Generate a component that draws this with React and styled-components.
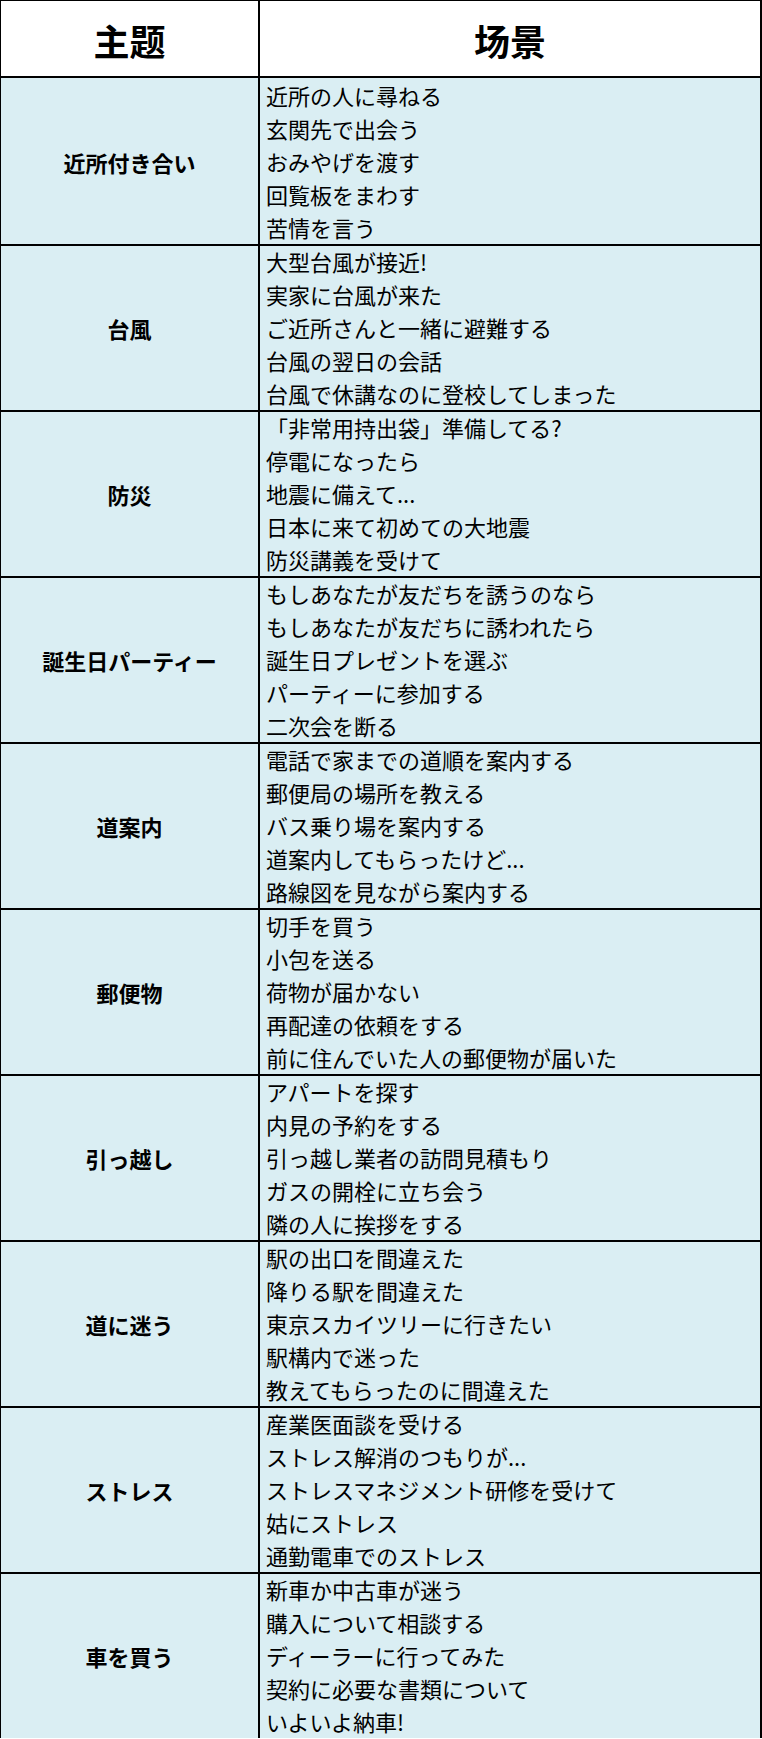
import React from 'react'
import styled, { createGlobalStyle } from 'styled-components'

const GlobalStyle = createGlobalStyle`
  html, body {
    margin: 0;
    padding: 0;
    background: #ffffff;
  }
  body {
    font-family: "Noto Sans CJK JP", "Noto Sans", sans-serif;
    color: #000;
  }
`

const data = [
  { theme: '近所付き合い', scenes: ['近所の人に尋ねる', '玄関先で出会う', 'おみやげを渡す', '回覧板をまわす', '苦情を言う'] },
  { theme: '台風', scenes: ['大型台風が接近!', '実家に台風が来た', 'ご近所さんと一緒に避難する', '台風の翌日の会話', '台風で休講なのに登校してしまった'] },
  { theme: '防災', scenes: ['「非常用持出袋」準備してる?', '停電になったら', '地震に備えて...', '日本に来て初めての大地震', '防災講義を受けて'] },
  { theme: '誕生日パーティー', scenes: ['もしあなたが友だちを誘うのなら', 'もしあなたが友だちに誘われたら', '誕生日プレゼントを選ぶ', 'パーティーに参加する', '二次会を断る'] },
  { theme: '道案内', scenes: ['電話で家までの道順を案内する', '郵便局の場所を教える', 'バス乗り場を案内する', '道案内してもらったけど...', '路線図を見ながら案内する'] },
  { theme: '郵便物', scenes: ['切手を買う', '小包を送る', '荷物が届かない', '再配達の依頼をする', '前に住んでいた人の郵便物が届いた'] },
  { theme: '引っ越し', scenes: ['アパートを探す', '内見の予約をする', '引っ越し業者の訪問見積もり', 'ガスの開栓に立ち会う', '隣の人に挨拶をする'] },
  { theme: '道に迷う', scenes: ['駅の出口を間違えた', '降りる駅を間違えた', '東京スカイツリーに行きたい', '駅構内で迷った', '教えてもらったのに間違えた'] },
  { theme: 'ストレス', scenes: ['産業医面談を受ける', 'ストレス解消のつもりが...', 'ストレスマネジメント研修を受けて', '姑にストレス', '通勤電車でのストレス'] },
  { theme: '車を買う', scenes: ['新車か中古車が迷う', '購入について相談する', 'ディーラーに行ってみた', '契約に必要な書類について', 'いよいよ納車!'] },
]

const Table = styled.div`
  width: 762px;
  box-sizing: border-box;
  border-top: 1px solid #000;
  border-left: 1px solid #000;
`

const Row = styled.div`
  display: grid;
  grid-template-columns: 259px 1fr;
  height: ${(p) => (p.$head ? '77px' : '166px')};
  background: ${(p) => (p.$head ? '#ffffff' : '#daeef3')};
`

const HeadCell = styled.div`
  box-sizing: border-box;
  border-right: 2px solid #000;
  border-bottom: 2px solid #000;
  display: flex;
  align-items: center;
  justify-content: center;
  font-family: "Noto Sans CJK SC", "Noto Sans", sans-serif;
  font-weight: 700;
  font-size: 36px;
  padding-top: 2px;
`

const ThemeCell = styled.div`
  box-sizing: border-box;
  border-right: 2px solid #000;
  border-bottom: 2px solid #000;
  display: flex;
  align-items: center;
  justify-content: center;
  font-weight: 700;
  font-size: 22px;
  padding-top: 2px;
`

const SceneCell = styled.div`
  box-sizing: border-box;
  border-right: 2px solid #000;
  border-bottom: 2px solid #000;
  padding: 1px 0 0 6px;
  display: flex;
  flex-direction: column;
`

const Scene = styled.div`
  font-size: 22px;
  line-height: 33px;
  white-space: nowrap;
`

export default function App() {
  return (
    <>
      <GlobalStyle />
      <Table>
        <Row $head>
          <HeadCell>主题</HeadCell>
          <HeadCell>场景</HeadCell>
        </Row>
        {data.map((r) => (
          <Row key={r.theme}>
            <ThemeCell>{r.theme}</ThemeCell>
            <SceneCell>
              {r.scenes.map((s) => (
                <Scene key={s}>{s}</Scene>
              ))}
            </SceneCell>
          </Row>
        ))}
      </Table>
    </>
  )
}
